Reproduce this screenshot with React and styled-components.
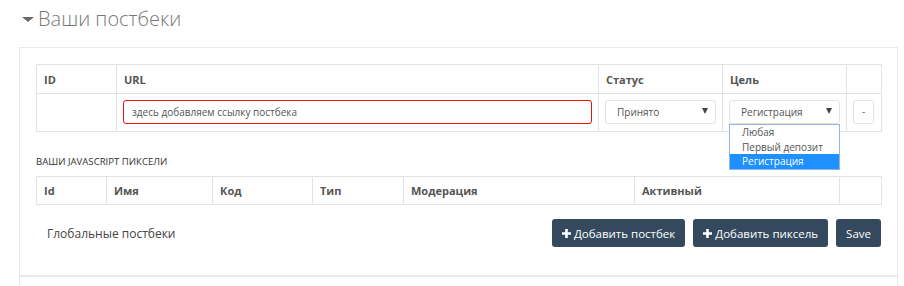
import React from "react";
import styled, { createGlobalStyle } from "styled-components";

const Global = createGlobalStyle`
  html, body { margin: 0; padding: 0; background: #fff; }
  body { font-family: "Open Sans", "Noto Sans", sans-serif; color: #555; overflow: hidden; }
  * { box-sizing: border-box; }
`;

const Page = styled.div`
  padding: 0 6px 0 19px;
  width: 904px;
  height: 286px;
  overflow: hidden;
`;

const Title = styled.h2`
  margin: 0 0 0 -19px;
  padding: 5px 0 0 22px;
  display: flex;
  align-items: center;
  gap: 4px;
  font-size: 20px;
  line-height: 28px;
  font-weight: 300;
  color: #777;
`;

const Caret = styled.span`
  width: 0;
  height: 0;
  border-left: 6px solid transparent;
  border-right: 6px solid transparent;
  border-top: 5px solid #6a6a6a;
  margin-top: 1px;
`;

const Panel = styled.div`
  margin-top: 14px;
  border: 1px solid #e6e9ed;
  padding: 16px 16px 28px 16px;
`;

const NextPanel = styled.div`
  border: 1px solid #e6e9ed;
  height: 40px;
`;

const Table = styled.table`
  width: 845px;
  border-collapse: collapse;
  table-layout: fixed;
  font-size: 11px;
`;

const Th = styled.th`
  border: 1px solid #e3e3e3;
  text-align: left;
  font-weight: 700;
  color: #555;
  height: ${(p) => p.$h || 29}px;
  padding: 0 7px;
  font-size: 11px;
`;

const Td = styled.td`
  border: 1px solid #e3e3e3;
  padding: 6px;
  height: 38px;
  vertical-align: top;
`;

const UrlInput = styled.div`
  height: 24px;
  border: 1px solid #ee1111;
  border-radius: 3px;
  padding: 0 8px;
  font-size: 10px;
  line-height: 22px;
  color: #555;
  width: 100%;
`;

const SelectWrap = styled.div`
  position: relative;
`;

const Select = styled.div`
  height: 24px;
  border: 1px solid #e2e2e2;
  border-radius: 3px;
  padding: 0 7px 0 11px;
  font-size: 10px;
  line-height: 22px;
  color: #555;
  display: flex;
  justify-content: space-between;
  align-items: center;
`;

const Arrow = styled.span`
  width: 0;
  height: 0;
  border-left: 3.5px solid transparent;
  border-right: 3.5px solid transparent;
  border-top: 6px solid #444;
  margin-top: -2px;
`;

const Dropdown = styled.ul`
  position: absolute;
  top: 24px;
  left: 0;
  right: 0;
  margin: 0;
  padding: 0;
  list-style: none;
  background: #fff;
  border: 1px solid #93b3e0;
  z-index: 5;
`;

const Option = styled.li`
  height: 14.5px;
  line-height: 14.5px;
  padding-left: 12px;
  font-size: 10px;
  color: ${(p) => (p.$active ? "#fff" : "#555")};
  background: ${(p) => (p.$active ? "#1e90ff" : "transparent")};
`;

const SmallBtn = styled.div`
  width: 21px;
  height: 24px;
  border: 1px solid #e2e2e2;
  border-radius: 3px;
  font-size: 10px;
  text-align: center;
  line-height: 21px;
  color: #666;
`;

const SectionLabel = styled.div`
  margin: 23px 0 7px;
  font-size: 9.6px;
  line-height: 14px;
  text-transform: uppercase;
  color: #333;
`;

const Footer = styled.div`
  display: flex;
  align-items: center;
  justify-content: space-between;
  margin-top: 14px;
  width: 845px;
`;

const GlobalLabel = styled.div`
  padding-left: 11px;
  font-size: 12px;
  color: #444;
`;

const Buttons = styled.div`
  display: flex;
  gap: 8px;
`;

const Button = styled.button`
  height: 28px;
  padding: 0 10px;
  border: none;
  border-radius: 3px;
  background: #34495e;
  color: #fff;
  font-family: "Open Sans", "Noto Sans", sans-serif;
  font-size: 11.5px;
  display: flex;
  align-items: center;
  gap: 3px;
`;

const Plus = () => (
  <svg width="9" height="9" viewBox="0 0 9 9">
    <path d="M3.2 0h2.6v3.2H9v2.6H5.8V9H3.2V5.8H0V3.2h3.2z" fill="#fff" />
  </svg>
);

export default function App() {
  return (
    <Page>
      <Global />
      <Title>
        <Caret />
        Ваши постбеки
      </Title>
      <Panel>
        <Table>
          <colgroup>
            <col style={{ width: 80 }} />
            <col style={{ width: 482 }} />
            <col style={{ width: 124 }} />
            <col style={{ width: 124 }} />
            <col style={{ width: 35 }} />
          </colgroup>
          <thead>
            <tr>
              <Th>ID</Th>
              <Th>URL</Th>
              <Th>Статус</Th>
              <Th>Цель</Th>
              <Th />
            </tr>
          </thead>
          <tbody>
            <tr>
              <Td />
              <Td>
                <UrlInput>здесь добавляем ссылку постбека</UrlInput>
              </Td>
              <Td>
                <Select>
                  Принято
                  <Arrow />
                </Select>
              </Td>
              <Td>
                <SelectWrap>
                  <Select>
                    Регистрация
                    <Arrow />
                  </Select>
                  <Dropdown>
                    <Option>Любая</Option>
                    <Option>Первый депозит</Option>
                    <Option $active>Регистрация</Option>
                  </Dropdown>
                </SelectWrap>
              </Td>
              <Td>
                <SmallBtn>-</SmallBtn>
              </Td>
            </tr>
          </tbody>
        </Table>

        <SectionLabel>Ваши JavaScript пиксели</SectionLabel>
        <Table>
          <colgroup>
            <col style={{ width: 70 }} />
            <col style={{ width: 106 }} />
            <col style={{ width: 100 }} />
            <col style={{ width: 91 }} />
            <col style={{ width: 231 }} />
            <col style={{ width: 205 }} />
            <col style={{ width: 42 }} />
          </colgroup>
          <thead>
            <tr>
              <Th $h={28}>Id</Th>
              <Th $h={28}>Имя</Th>
              <Th $h={28}>Код</Th>
              <Th $h={28}>Тип</Th>
              <Th $h={28}>Модерация</Th>
              <Th $h={28}>Активный</Th>
              <Th $h={28} />
            </tr>
          </thead>
        </Table>

        <Footer>
          <GlobalLabel>Глобальные постбеки</GlobalLabel>
          <Buttons>
            <Button>
              <Plus />
              Добавить постбек
            </Button>
            <Button>
              <Plus />
              Добавить пиксель
            </Button>
            <Button>Save</Button>
          </Buttons>
        </Footer>
      </Panel>
      <NextPanel />
    </Page>
  );
}
